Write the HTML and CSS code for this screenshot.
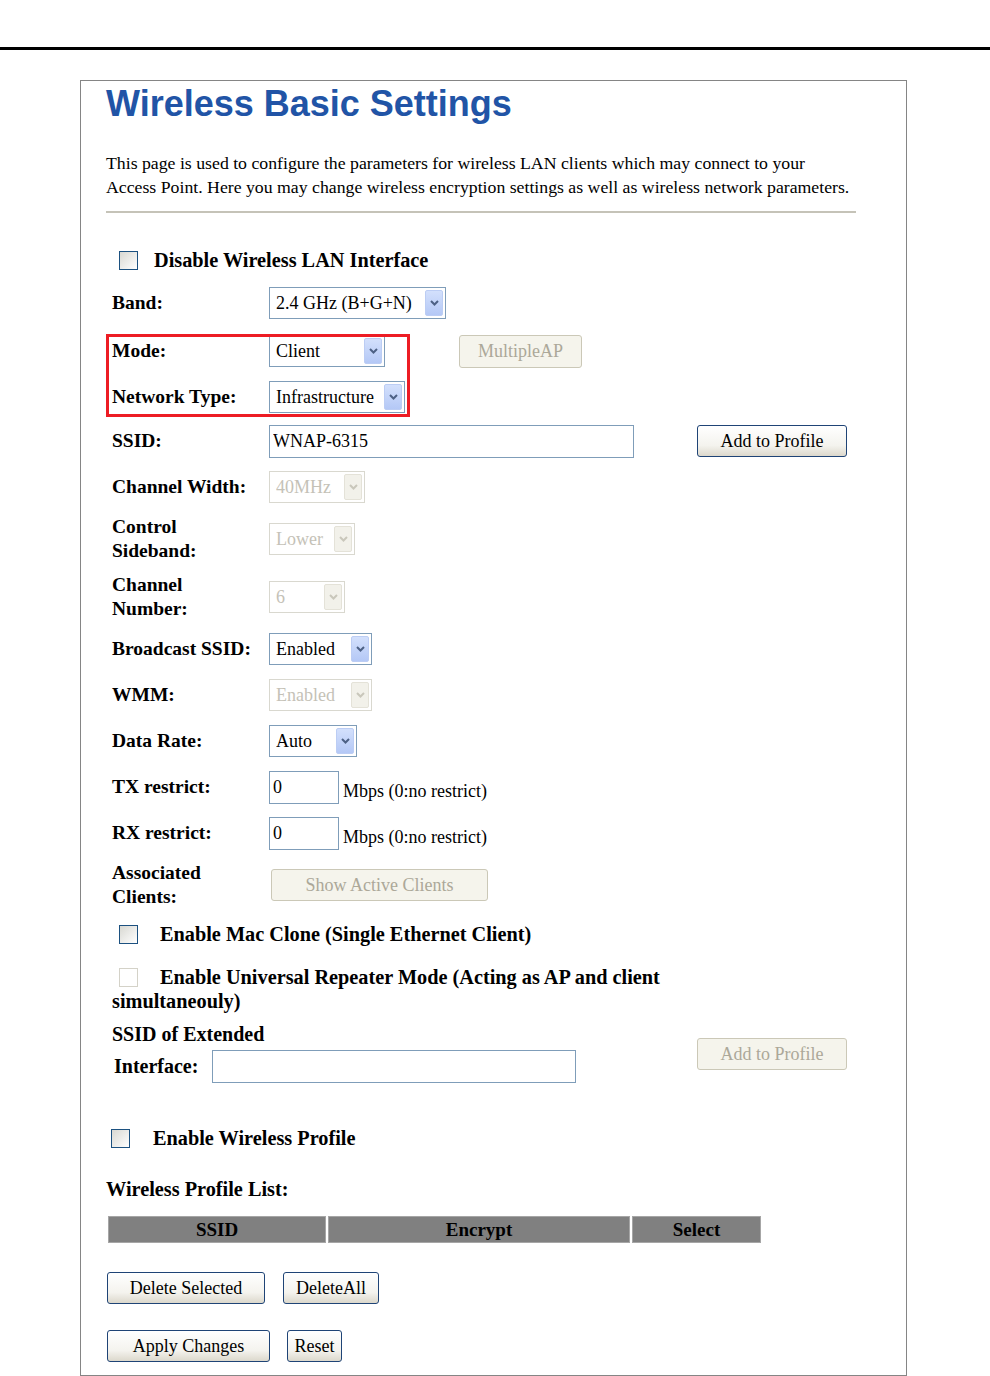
FILE: index.html
```html
<!DOCTYPE html>
<html lang="en">

<head>
  <meta charset="UTF-8" />
  <meta name="viewport" content="width=device-width, initial-scale=1.0" />
  <title>Wireless Basic Settings</title>
  <link rel="stylesheet" href="styles.css">
</head>

<body>
  <div class="top-rule"></div>

  <div class="frame">
    <h1 class="title">Wireless Basic Settings</h1>
    <p class="intro">This page is used to configure the parameters for wireless LAN clients which may connect to your<br>
      Access Point. Here you may change wireless encryption settings as well as wireless network parameters.</p>
    <hr class="divider">

    <form class="settings" onsubmit="return false;">
      <div class="check-row check-disable">
        <input type="checkbox" class="check" id="wlanDisabled">
        <label for="wlanDisabled">Disable Wireless LAN Interface</label>
      </div>

      <div class="row">
        <span class="label">Band:</span>
        <div>
          <span class="select w-band">
            <select><option>2.4 GHz (B+G+N)</option></select>
            <span class="arrow"><svg width="9" height="6" viewBox="0 0 9 6"><path d="M1 1 L4.5 4.5 L8 1" /></svg></span>
          </span>
        </div>
      </div>

      <div class="marked">
        <div class="row row-mode">
          <span class="label">Mode:</span>
          <div class="cell-inline">
            <span class="select w-mode">
              <select><option>Client</option></select>
              <span class="arrow"><svg width="9" height="6" viewBox="0 0 9 6"><path d="M1 1 L4.5 4.5 L8 1" /></svg></span>
            </span>
            <button type="button" class="btn btn-multiap" disabled>MultipleAP</button>
          </div>
        </div>
        <div class="row row-nettype">
          <span class="label">Network Type:</span>
          <div>
            <span class="select w-nettype">
              <select><option>Infrastructure</option></select>
              <span class="arrow"><svg width="9" height="6" viewBox="0 0 9 6"><path d="M1 1 L4.5 4.5 L8 1" /></svg></span>
            </span>
          </div>
        </div>
        <span class="annotation"></span>
      </div>

      <div class="row">
        <span class="label">SSID:</span>
        <div><input type="text" class="text-input w-ssid" value="WNAP-6315"></div>
        <button type="button" class="btn btn-profile">Add to Profile</button>
      </div>

      <div class="row">
        <span class="label">Channel Width:</span>
        <div>
          <span class="select w-width">
            <select disabled><option>40MHz</option></select>
            <span class="arrow"><svg width="9" height="6" viewBox="0 0 9 6"><path d="M1 1 L4.5 4.5 L8 1" /></svg></span>
          </span>
        </div>
      </div>

      <div class="row tall">
        <span class="label">Control<br>Sideband:</span>
        <div>
          <span class="select w-sideband">
            <select disabled><option>Lower</option></select>
            <span class="arrow"><svg width="9" height="6" viewBox="0 0 9 6"><path d="M1 1 L4.5 4.5 L8 1" /></svg></span>
          </span>
        </div>
      </div>

      <div class="row tall">
        <span class="label">Channel<br>Number:</span>
        <div>
          <span class="select w-channel">
            <select disabled><option>6</option></select>
            <span class="arrow"><svg width="9" height="6" viewBox="0 0 9 6"><path d="M1 1 L4.5 4.5 L8 1" /></svg></span>
          </span>
        </div>
      </div>

      <div class="row">
        <span class="label">Broadcast SSID:</span>
        <div>
          <span class="select w-enabled">
            <select><option>Enabled</option></select>
            <span class="arrow"><svg width="9" height="6" viewBox="0 0 9 6"><path d="M1 1 L4.5 4.5 L8 1" /></svg></span>
          </span>
        </div>
      </div>

      <div class="row">
        <span class="label">WMM:</span>
        <div>
          <span class="select w-enabled">
            <select disabled><option>Enabled</option></select>
            <span class="arrow"><svg width="9" height="6" viewBox="0 0 9 6"><path d="M1 1 L4.5 4.5 L8 1" /></svg></span>
          </span>
        </div>
      </div>

      <div class="row">
        <span class="label">Data Rate:</span>
        <div>
          <span class="select w-rate">
            <select><option>Auto</option></select>
            <span class="arrow"><svg width="9" height="6" viewBox="0 0 9 6"><path d="M1 1 L4.5 4.5 L8 1" /></svg></span>
          </span>
        </div>
      </div>

      <div class="row">
        <span class="label">TX restrict:</span>
        <div class="cell-inline">
          <input type="text" class="text-input w-restrict" value="0">
          <span class="unit">Mbps (0:no restrict)</span>
        </div>
      </div>

      <div class="row">
        <span class="label">RX restrict:</span>
        <div class="cell-inline">
          <input type="text" class="text-input w-restrict" value="0">
          <span class="unit">Mbps (0:no restrict)</span>
        </div>
      </div>

      <div class="row tall">
        <span class="label">Associated<br>Clients:</span>
        <div><button type="button" class="btn btn-clients" disabled>Show Active Clients</button></div>
      </div>

      <div class="check-row check-clone">
        <input type="checkbox" class="check" id="macClone">
        <label for="macClone">Enable Mac Clone (Single Ethernet Client)</label>
      </div>

      <p class="wrap-check"><input type="checkbox" class="check" id="repeater" disabled><label for="repeater">Enable Universal Repeater Mode (Acting as AP and client simultaneouly)</label></p>

      <div class="extended">
        <div class="ext-label">
          <div>SSID of Extended</div>
          <div class="ext-line">
            <span class="ext-name">Interface:</span>
            <input type="text" class="text-input w-extended" value="">
          </div>
        </div>
        <button type="button" class="btn btn-profile" disabled>Add to Profile</button>
      </div>

      <div class="check-row check-profile">
        <input type="checkbox" class="check" id="profileEnabled">
        <label for="profileEnabled">Enable Wireless Profile</label>
      </div>

      <p class="list-title">Wireless Profile List:</p>

      <table class="profile-table">
        <thead>
          <tr>
            <th class="col-ssid">SSID</th>
            <th class="col-encrypt">Encrypt</th>
            <th class="col-select">Select</th>
          </tr>
        </thead>
      </table>

      <div class="actions">
        <button type="button" class="btn btn-delete">Delete Selected</button>
        <button type="button" class="btn btn-delete-all">DeleteAll</button>
      </div>

      <div class="actions actions-apply">
        <button type="button" class="btn btn-apply">Apply Changes</button>
        <button type="button" class="btn btn-reset">Reset</button>
      </div>
    </form>
  </div>
</body>

</html>
```

FILE: styles.css
```css
body {
  margin: 0;
  font-family: "Liberation Serif", "Times New Roman", serif;
  color: #000;
  background-color: #ffffff;
}

.top-rule {
  margin-top: 47px;
  height: 3px;
  background-color: #000;
}

.frame {
  box-sizing: border-box;
  width: 827px;
  min-height: 1296px;
  margin: 30px 0 0 80px;
  padding: 5px 0 0 25px;
  border: 1px solid #858585;
}

.title {
  margin: 0;
  font-family: "Liberation Sans", Arial, sans-serif;
  font-size: 36px;
  line-height: 36px;
  font-weight: bold;
  color: #2154a6;
}

.intro {
  margin: 29px 0 0;
  font-size: 17.75px;
  line-height: 24px;
}

.divider {
  width: 750px;
  height: 0;
  margin: 12px 0 0;
  border: 0;
  border-top: 2px solid #c5c3b8;
}

.settings {
  margin-top: 27px;
}

/* form rows */
.row {
  display: grid;
  grid-template-columns: 157px 428px auto;
  align-items: center;
  height: 46px;
  padding-left: 6px;
}

.row.tall {
  height: 58px;
}

.row-mode {
  height: 50px;
}

.row-nettype {
  height: 42px;
}

.label {
  font-size: 19.5px;
  font-weight: bold;
  line-height: 24px;
}

.cell-inline {
  display: flex;
  align-items: center;
}

.marked {
  position: relative;
}

.annotation {
  position: absolute;
  left: 0;
  top: 8px;
  width: 304px;
  height: 83px;
  box-sizing: border-box;
  border: 3px solid #ed1c24;
  pointer-events: none;
}

/* selects */
.select {
  position: relative;
  display: inline-block;
  height: 32px;
  vertical-align: middle;
}

.select select {
  -webkit-appearance: none;
  appearance: none;
  box-sizing: border-box;
  width: 100%;
  height: 100%;
  margin: 0;
  padding: 0 22px 0 6px;
  border: 1px solid #7f9db9;
  border-radius: 0;
  background-color: #fff;
  font-family: "Liberation Serif", "Times New Roman", serif;
  font-size: 18px;
  color: #000;
}

.select .arrow {
  position: absolute;
  top: 3px;
  right: 3px;
  bottom: 3px;
  width: 18px;
  box-sizing: border-box;
  display: flex;
  align-items: center;
  justify-content: center;
  border: 1px solid #bccdf4;
  border-radius: 2px;
  background: linear-gradient(#d3e0fc, #b4c8f6);
}

.select .arrow path {
  fill: none;
  stroke: #4d6185;
  stroke-width: 2;
}

.select select:disabled {
  border-color: #cac8bb;
  color: #aca899;
}

.select select:disabled + .arrow {
  border-color: #e4e2d8;
  background: #f2f1ea;
}

.select select:disabled + .arrow path {
  stroke: #c9c7bb;
}

.w-band { width: 177px; }
.w-mode { width: 116px; }
.w-nettype { width: 136px; }
.w-width { width: 96px; }
.w-sideband { width: 86px; }
.w-channel { width: 76px; }
.w-enabled { width: 103px; }
.w-rate { width: 88px; }

/* text inputs */
.text-input {
  box-sizing: border-box;
  height: 33px;
  margin: 0;
  padding: 0 3px;
  border: 1px solid #7f9db9;
  font-family: "Liberation Serif", "Times New Roman", serif;
  font-size: 18px;
  color: #000;
}

.w-ssid { width: 365px; }
.w-restrict { width: 70px; }
.w-extended { width: 364px; }

.unit {
  margin: 8px 0 0 4px;
  font-size: 18px;
}

/* buttons */
.btn {
  box-sizing: border-box;
  height: 32px;
  padding: 0;
  border: 1px solid #1f4476;
  border-radius: 3px;
  background: linear-gradient(#ffffff, #f4f3ee 65%, #dcd8cc);
  font-family: "Liberation Serif", "Times New Roman", serif;
  font-size: 18px;
  color: #000;
  cursor: pointer;
}

.btn:disabled {
  border-color: #cbc8b7;
  background: #f5f4ec;
  color: #aca899;
  cursor: default;
}

.btn-multiap { width: 123px; height: 33px; margin-left: 74px; }
.btn-profile { width: 150px; }
.btn-clients { width: 217px; margin-left: 2px; }
.btn-delete { width: 158px; }
.btn-delete-all { width: 96px; }
.btn-apply { width: 163px; }
.btn-reset { width: 55px; }

/* checkboxes */
.check {
  -webkit-appearance: none;
  appearance: none;
  box-sizing: border-box;
  width: 19px;
  height: 19px;
  margin: 0;
  border: 1px solid #1c5180;
  background: linear-gradient(135deg, #d8d8d2, #ffffff);
  vertical-align: -3px;
}

.check:disabled {
  border-color: #d4d2c8;
  background: #ffffff;
}

.check-row {
  display: flex;
  align-items: center;
  font-size: 20.3px;
  font-weight: bold;
}

.check-disable {
  height: 40px;
  padding-left: 13px;
}

.check-disable .check {
  margin-right: 16px;
}

.check-clone {
  height: 40px;
  padding-left: 13px;
}

.check-clone .check {
  margin-right: 22px;
}

.wrap-check {
  width: 585px;
  margin: 11px 0 0;
  padding-left: 6px;
  font-size: 20.3px;
  font-weight: bold;
  line-height: 24px;
}

.wrap-check .check {
  margin: 0 22px 0 7px;
}

.extended {
  display: grid;
  grid-template-columns: 591px auto;
  align-items: center;
  margin-top: 9px;
}

.ext-label {
  padding-left: 6px;
  font-size: 20px;
  font-weight: bold;
  line-height: 24px;
}

.ext-line {
  display: flex;
  align-items: center;
  height: 40px;
}

.ext-name {
  width: 98px;
  padding-left: 2px;
}

.check-profile {
  height: 24px;
  margin-top: 40px;
  padding-left: 5px;
}

.check-profile .check {
  margin-right: 23px;
}

.list-title {
  margin: 27px 0 0;
  font-size: 20.3px;
  font-weight: bold;
  line-height: 24px;
}

/* profile table */
.profile-table {
  margin-top: 13px;
  border-spacing: 2px;
}

.profile-table th {
  box-sizing: border-box;
  height: 27px;
  padding: 0;
  border: 1px solid #a6a6a6;
  background-color: #808080;
  font-size: 19px;
  font-weight: bold;
}

.col-ssid { width: 218px; }
.col-encrypt { width: 302px; }
.col-select { width: 129px; }

.actions {
  display: flex;
  gap: 18px;
  margin-top: 27px;
  padding-left: 1px;
}

.actions-apply {
  gap: 17px;
  margin-top: 26px;
}
```
